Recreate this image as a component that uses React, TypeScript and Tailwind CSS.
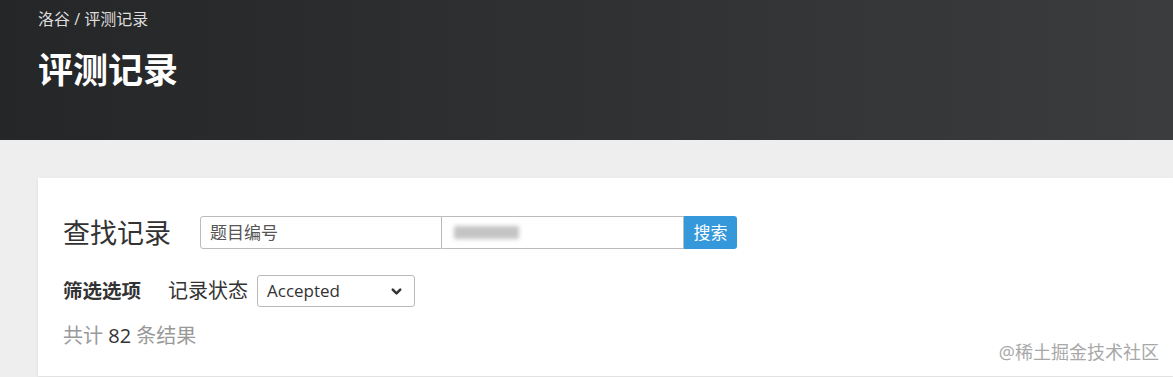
import { ChevronDown } from 'lucide-react'

const cjk = '"Open Sans", "Noto Sans CJK SC", sans-serif'

export default function App() {
  return (
    <div className="w-[1173px] h-[377px] overflow-hidden bg-[#eeeeee]" style={{ fontFamily: cjk }}>
      <header className="h-[140px] bg-gradient-to-r from-[#252627] to-[#3b3c3e] pl-[38px] pt-[6px]">
        <div className="text-[16px] leading-[26px] text-[#dddddd]">洛谷 / 评测记录</div>
        <h1 className="mt-[17px] text-[35px] leading-[42px] font-bold text-white">评测记录</h1>
      </header>
      <main className="pt-[38px] pl-[38px]">
        <section className="bg-white h-[198px] pl-[25px] pt-[38px] shadow-[0_1px_3px_rgba(0,0,0,0.08)]">
          <div className="flex items-center">
            <span className="text-[27px] leading-[32px] text-[#333] w-[137px]">查找记录</span>
            <div className="flex h-[33px]">
              <input
                readOnly
                placeholder="题目编号"
                className="w-[242px] h-full border border-[#bbb] rounded-l-[3px] px-[9px] text-[17px] text-[#333] placeholder:text-[#555] outline-none"
              />
              <div className="w-[242px] h-full border border-l-0 border-[#bbb] flex items-center pl-[12px]">
                <span className="text-[13px] text-[#c4c4c4] blur-[2px]">█████</span>
              </div>
              <button className="w-[53px] h-full bg-[#3498db] text-white text-[17px] rounded-r-[3px]">搜索</button>
            </div>
          </div>
          <div className="flex items-center mt-[26px]">
            <span className="text-[19.5px] font-bold text-[#333]">筛选选项</span>
            <span className="text-[20px] text-[#333] ml-[27px]">记录状态</span>
            <div className="ml-[9px] w-[158px] h-[32px] border border-[#bbb] rounded-[3px] flex items-center justify-between pl-[9px] pr-[10px]">
              <span className="text-[17px] text-[#333]">Accepted</span>
              <ChevronDown size={15} strokeWidth={4} className="text-[#333]" />
            </div>
          </div>
          <div className="mt-[14px] text-[20px] leading-[30px] text-[#999]">
            共计 <span className="text-[#333]">82</span> 条结果
          </div>
          <div className="flex justify-end pr-[14px] -mt-[12px] text-[18px] leading-[26px] text-[#a8a8a8]">@稀土掘金技术社区</div>
        </section>
      </main>
    </div>
  )
}
